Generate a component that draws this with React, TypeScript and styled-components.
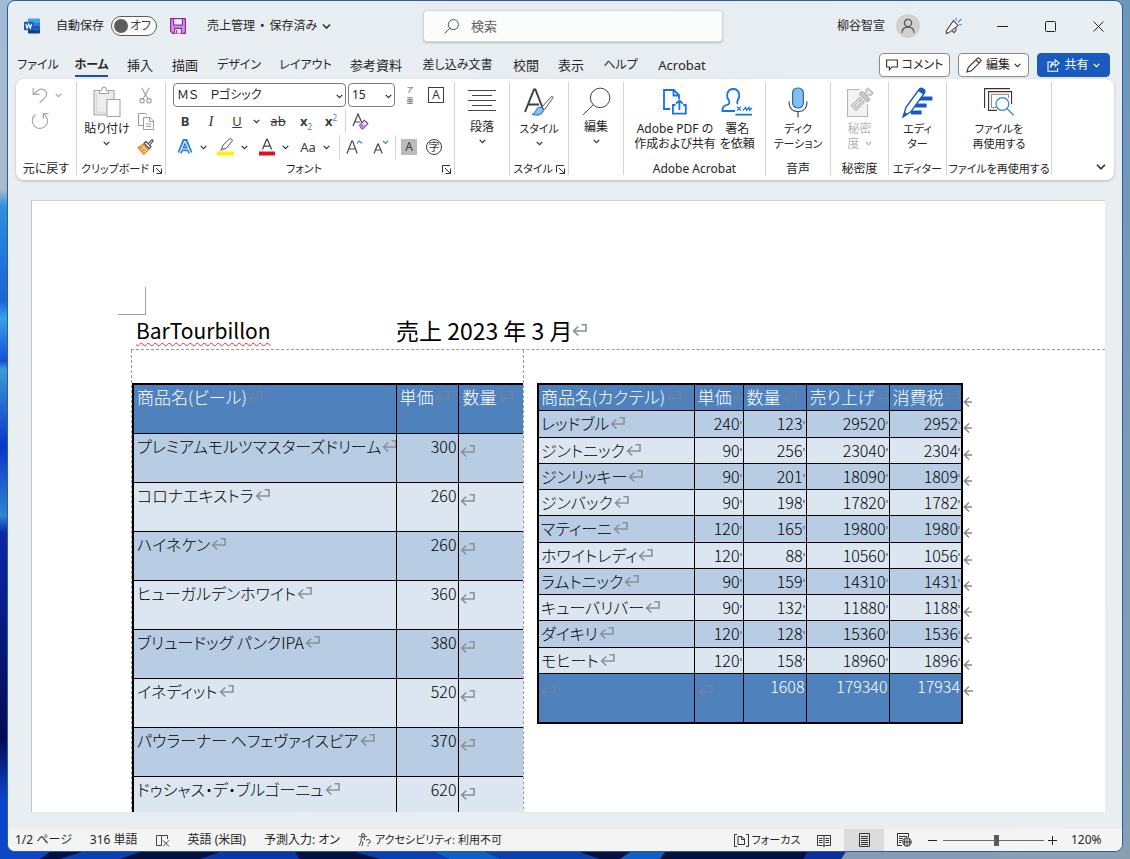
import React from "react";
import styled, { createGlobalStyle, css } from "styled-components";

const GlobalStyle = createGlobalStyle`
  *, *::before, *::after { box-sizing: border-box; }
  body {
    margin: 0;
    font-family: "Noto Sans", "Noto Sans CJK JP", sans-serif;
    font-feature-settings: "palt";
    font-size: 12px;
    line-height: 16px;
    color: #262626;
  }
  button, select, input { font: inherit; font-feature-settings: inherit; color: inherit; }
  button { background: none; border: 0; padding: 0; cursor: pointer; }
  svg { display: block; flex: none; }
`;

/* ---------- desktop and window ---------- */

const Desktop = styled.div`
  position: relative;
  height: 100vh;
  padding: 0 7px 7px 7px;
  background: #849cb4;
  overflow: hidden;
`;

const Wallpaper = styled.svg`
  position: absolute;
  inset: 0;
  width: 100%;
  height: 100%;
`;

const AppWindow = styled.div`
  position: relative;
  height: 100%;
  display: flex;
  flex-direction: column;
  border: 1px solid #2a5caa;
  border-radius: 8px;
  background: linear-gradient(100deg, #e9eef3 0%, #e8edf2 50%, #e9eef1 100%);
  overflow: hidden;
`;

const TitleBar = styled.header`
  display: grid;
  grid-template-columns: 1fr 300px 399px;
  align-items: center;
  height: 50px;
  flex: none;
`;

const TitleLeft = styled.div`
  display: flex;
  align-items: center;
  padding-left: 16px;
`;

const AutoSave = styled.label`
  display: flex;
  align-items: center;
  gap: 7px;
  margin: 0 13px 0 16px;
`;

const Toggle = styled.span`
  display: flex;
  align-items: center;
  width: 46px;
  height: 20px;
  padding: 0 5px 0 2px;
  justify-content: space-between;
  border: 1px solid #5c5c5c;
  border-radius: 10px;
  background: #fbfbfb;
  color: #444;
  input {
    appearance: none;
    margin: 0;
    width: 14px;
    height: 14px;
    border-radius: 50%;
    background: #5c5c5c;
  }
`;

const FileName = styled.button`
  display: flex;
  align-items: center;
  gap: 5px;
  margin-left: 21px;
`;

const SearchBox = styled.label`
  display: flex;
  align-items: center;
  gap: 12px;
  height: 32px;
  padding-left: 20px;
  border: 1px solid #d5d8da;
  border-radius: 4px;
  background: #fbfcfc;
  box-shadow: 0 1px 2px rgba(0, 0, 0, 0.2);
  input {
    flex: 1;
    min-width: 0;
    border: 0;
    outline: 0;
    padding: 0;
    background: none;
    font-size: 13px;
  }
  input::placeholder { color: #616161; opacity: 1; }
`;

const TitleRight = styled.div`
  display: flex;
  align-items: center;
  justify-content: flex-end;
`;

const Avatar = styled.span`
  display: grid;
  place-items: center;
  width: 24px;
  height: 24px;
  margin: 0 10px 0 11px;
  border-radius: 50%;
  background: #d1d1d1;
`;

const CaptionButton = styled.button`
  display: grid;
  place-items: center;
  width: 48px;
  height: 40px;
`;

/* ---------- tabs ---------- */

const TabRow = styled.div`
  display: flex;
  justify-content: space-between;
  align-items: center;
  height: 28px;
  flex: none;
  padding: 0 12px;
`;

const Tabs = styled.nav`
  display: flex;
  gap: 19px;
`;

const Tab = styled.button<{ $w: number; $kana?: boolean; $active?: boolean }>`
  width: ${(p) => p.$w}px;
  height: 24px;
  line-height: 24px;
  font-size: ${(p) => (p.$kana ? 12 : 13)}px;
  white-space: nowrap;
  display: flex;
  justify-content: center;
  border-bottom: 2px solid transparent;
  ${(p) =>
    p.$active &&
    css`
      font-weight: 700;
      border-color: #1a50a8;
    `}
`;

const TabActions = styled.div`
  display: flex;
  gap: 8px;
`;

const ActionButton = styled.button<{ $primary?: boolean }>`
  display: flex;
  align-items: center;
  justify-content: center;
  gap: 4px;
  width: ${(p) => (p.$primary ? 73 : 71)}px;
  height: 24px;
  border-radius: 4px;
  border: 1px solid ${(p) => (p.$primary ? "#185abd" : "#8a8a8a")};
  background: ${(p) => (p.$primary ? "#185abd" : "#fdfdfd")};
  color: ${(p) => (p.$primary ? "#fff" : "#262626")};
`;

/* ---------- ribbon ---------- */

const Ribbon = styled.section`
  display: flex;
  flex: none;
  height: 101px;
  margin: 0 8px;
  padding: 3px 0 5px;
  border-radius: 8px;
  background: #fff;
  box-shadow: 0 1px 3px rgba(0, 0, 0, 0.22);
`;

const Group = styled.div<{ $w?: number }>`
  display: flex;
  flex-direction: column;
  ${(p) =>
    p.$w
      ? css`
          flex: none;
          width: ${p.$w}px;
          border-right: 1px solid #d4d4d4;
        `
      : css`
          flex: 1;
          align-items: flex-end;
          justify-content: flex-end;
          padding: 0 8px 3px 0;
        `}
`;

const GroupBody = styled.div`
  flex: 1;
  display: flex;
  justify-content: center;
`;

const GroupFooter = styled.div<{ $small?: boolean }>`
  display: flex;
  align-items: center;
  justify-content: center;
  height: 12px;
  line-height: 12px;
  font-size: ${(p) => (p.$small ? 11 : 12)}px;
  white-space: nowrap;
  span { flex: 1; display: flex; justify-content: center; }
  svg { margin-right: 3px; }
`;

const IconStack = styled.div`
  display: flex;
  flex-direction: column;
`;

const ToolButton = styled.button<{ $w: number }>`
  display: grid;
  place-items: center;
  width: ${(p) => p.$w}px;
  height: 26px;
  flex: none;
`;

const BigButton = styled.button<{ $muted?: boolean; $kana?: boolean }>`
  display: flex;
  flex-direction: column;
  align-items: center;
  padding: 1px 2px 0;
  line-height: 15px;
  font-size: ${(p) => (p.$kana ? 11 : 12)}px;
  white-space: nowrap;
  color: ${(p) => (p.$muted ? "#b4b4b4" : "#262626")};
  > svg { margin-top: 4px; }
`;

const BigIcon = styled.span<{ $short?: boolean }>`
  display: grid;
  place-items: center;
  height: ${(p) => (p.$short ? 36 : 38)}px;
`;

const InlineLine = styled.span`
  display: flex;
  align-items: center;
  gap: 5px;
`;

const FontTools = styled.div`
  flex: 1;
  padding-left: 7px;
`;

const ToolLine = styled.div`
  display: flex;
  align-items: center;
  height: 26px;
`;

const SelectBox = styled.label<{ $w: number }>`
  position: relative;
  width: ${(p) => p.$w}px;
  margin-right: 2px;
  select {
    appearance: none;
    width: 100%;
    height: 24px;
    padding: 0 14px 0 3px;
    border: 1px solid #7c7c7c;
    border-radius: 4px;
    background: #fff;
  }
  svg {
    position: absolute;
    right: 3px;
    top: 10px;
  }
`;

const Split = styled.div`
  display: flex;
  width: 41px;
`;

const Divider = styled.span<{ $w: number }>`
  width: ${(p) => p.$w}px;
  height: 24px;
  background: linear-gradient(#d4d4d4, #d4d4d4) center / 1px 100% no-repeat;
`;

const Glyph = styled.span<{ $bold?: boolean; $italic?: boolean; $line?: string; $size?: number }>`
  font-size: ${(p) => p.$size ?? 13}px;
  line-height: 18px;
  color: #3b3b3b;
  font-weight: ${(p) => (p.$bold ? 700 : 400)};
  font-style: ${(p) => (p.$italic ? "italic" : "normal")};
  font-family: ${(p) => (p.$italic ? '"Liberation Serif", serif' : "inherit")};
  text-decoration: ${(p) => p.$line ?? "none"};
  sub, sup { color: #2b88d8; font-size: 8px; line-height: 0; font-weight: 400; }
`;

const Boxed = styled.span<{ $shape: "box" | "fill" | "circle" }>`
  display: grid;
  place-items: center;
  width: 16px;
  height: 16px;
  font-size: ${(p) => (p.$shape === "circle" ? 11 : 12)}px;
  line-height: 14px;
  color: #3b3b3b;
  border: 1px solid ${(p) => (p.$shape === "fill" ? "#bcbcbc" : "#3b3b3b")};
  border-radius: ${(p) => (p.$shape === "circle" ? 8 : 0)}px;
  background: ${(p) => (p.$shape === "fill" ? "#bcbcbc" : "transparent")};
`;

const RubyGlyph = styled.span`
  display: flex;
  flex-direction: column;
  align-items: center;
  gap: 2px;
  font-family: "Noto Sans CJK JP", sans-serif;
  font-size: 7px;
  line-height: 9px;
  color: #555;
`;

/* ---------- document ---------- */

const Workspace = styled.main`
  flex: 1;
  min-height: 0;
  display: flex;
  padding: 20px 17px 17px 23px;
`;

const Page = styled.article`
  flex: 1;
  min-width: 0;
  overflow: hidden;
  background: #fff;
  border-top: 1px solid #cdd1d5;
  border-left: 1px solid #bfc4c9;
  padding: 86px 0 0 86px;
  font-family: "Noto Sans CJK JP", sans-serif;
  color: #000;
`;

const CropMark = styled.div`
  width: 28px;
  height: 28px;
  border-right: 1px solid #a0a0a0;
  border-bottom: 1px solid #a0a0a0;
`;

const Heading = styled.h1`
  display: flex;
  align-items: center;
  height: 34px;
  margin: 0 0 0 18px;
  font-size: 23px;
  line-height: 30px;
  padding-bottom: 4px;
  font-weight: 400;
  white-space: pre;
`;

const ShopName = styled.span`
  width: 260px;
  font-size: 21px;
  u {
    text-decoration: underline wavy #e03030 1px;
    text-underline-offset: 3px;
    text-decoration-skip-ink: none;
  }
`;

const Columns = styled.div`
  display: flex;
  margin-left: 13px;
  border-top: 1px dashed #9a9a9a;
`;

const BeerColumn = styled.section`
  flex: none;
  width: 393px;
  padding-top: 33px;
  border-left: 1px dashed #9a9a9a;
  border-right: 1px dashed #9a9a9a;
  height: 640px;
`;

const CocktailColumn = styled.section`
  flex: 1;
  min-width: 0;
  padding: 33px 0 0 13px;
`;

const Sheet = styled.table<{ $tall?: boolean }>`
  border-collapse: collapse;
  table-layout: fixed;
  width: ${(p) => (p.$tall ? 391 : 437)}px;
  font-size: 16px;
  line-height: 24px;
  font-weight: 300;
  th, td {
    padding: 0 1px 0 3px;
    border: 1px solid #000;
    vertical-align: top;
    text-align: right;
    white-space: nowrap;
    overflow: hidden;
    font-weight: 300;
  }
  tr { height: ${(p) => (p.$tall ? 49 : 26)}px; }
  th { text-align: left; font-size: 17px; }
  tr > :first-child { border-left: 2px solid #000; text-align: left; padding-left: 2px; }
  thead th { border-top: 2px solid #000; }
  thead tr, tfoot tr { background: #4f81bd; color: #fff; }
  tbody tr { background: #dce6f0; }
  tbody tr:nth-child(odd) { background: #b8cce4; }
  ${(p) =>
    p.$tall
      ? css`
          tr > :first-child { padding-left: 3px; }
          tr > :last-child { border-right: 0; padding-left: 1px; text-align: left; }
          thead th:last-child { padding-left: 4px; }
        `
      : css`
          tbody tr:nth-child(4n + 1) { height: 27px; }
          tfoot tr { height: 50px; }
          tfoot td { border-bottom: 2px solid #000; }
          tr > :nth-child(5) { border-right: 2px solid #000; }
          thead tr > td:last-child, tr > td:last-child {
            border: 0;
            padding: 0;
            background: #fff;
            text-align: left;
          }
        `}
`;

const CellText = styled.span`
  display: flex;
  align-items: center;
  gap: 1px;
`;

const CellEnd = styled.i`
  display: inline-block;
  width: 2px;
  height: 3px;
  margin-bottom: 6px;
  background: #8d959e;
`;

const MarkBox = styled.span`
  display: flex;
  align-items: flex-end;
  height: 24px;
`;

/* ---------- status bar ---------- */

const StatusBar = styled.footer`
  flex: none;
  display: flex;
  align-items: center;
  justify-content: space-between;
  height: 22px;
  background: #f4f4f4;
  padding: 0 17px 0 7px;
  white-space: nowrap;
`;

const StatusSide = styled.div`
  display: flex;
  align-items: center;
  gap: 18px;
  height: 100%;
`;

const StatusButton = styled.button<{ $w?: number; $on?: boolean; $kana?: boolean }>`
  display: flex;
  align-items: center;
  justify-content: center;
  gap: 3px;
  height: 100%;
  font-size: ${(p) => (p.$kana ? 11 : 12)}px;
  width: ${(p) => (p.$w ? p.$w + "px" : "auto")};
  background: ${(p) => (p.$on ? "#dcdcdc" : "transparent")};
`;

const ZoomArea = styled.div`
  display: flex;
  align-items: center;
  height: 100%;
`;

const ZoomRange = styled.input`
  appearance: none;
  width: 101px;
  height: 12px;
  margin: 0 3px;
  background: linear-gradient(#6a6a6a, #6a6a6a) center / 100% 1px no-repeat;
  &::-webkit-slider-thumb {
    appearance: none;
    width: 5px;
    height: 11px;
    background: #5a5a5a;
  }
`;

const ZoomValue = styled.span`
  width: 34px;
  margin-left: 14px;
`;

/* ---------- icons ---------- */

const Chevron = ({ size = 7, color = "#333" }: { size?: number; color?: string }) => (
  <svg width={size} height={size} viewBox="0 0 8 8" fill="none" stroke={color} strokeWidth="1.4">
    <path d="M0.8 2.2L4 5.4L7.2 2.2" />
  </svg>
);

const Launcher = () => (
  <svg width="9" height="9" viewBox="0 0 9 9" fill="none" stroke="#333">
    <path d="M0.5 7.5V0.5H8M3 3L8 8M8.5 3.5V8.5H3.5" />
  </svg>
);

const ReturnMark = ({ color = "#8b9198" }: { color?: string }) => (
  <svg width="15" height="14" viewBox="0 0 15 14" fill="none" stroke={color} strokeWidth="1.6">
    <path d="M9.5 1.8H14V8H1.8M6.3 3.5L1.6 8L6.3 12.5" />
  </svg>
);

const RowEndMark = () => (
  <svg width="10" height="14" viewBox="0 0 10 14" fill="none" stroke="#8b8b8b" strokeWidth="1.5">
    <path d="M10 8H1.6M6 3.5L1.4 8L6 12.5" />
  </svg>
);

const WordLogo = () => (
  <svg width="16" height="16" viewBox="0 0 16 16">
    <path d="M4 1.2Q4 0.5 4.7 0.5H15.3Q16 0.5 16 1.2V4.3H4Z" fill="#41a5ee" />
    <path d="M4 4.3H16V8H4Z" fill="#2b7cd3" />
    <path d="M4 8H16V11.7H4Z" fill="#185abd" />
    <path d="M4 11.7H16V14.8Q16 15.5 15.3 15.5H4.7Q4 15.5 4 14.8Z" fill="#103f91" />
    <rect x="0" y="3.8" width="9.4" height="8.4" rx="0.8" fill="#185abd" />
    <path d="M1.8 5.8L3.1 10.2L4.7 6.2L6.3 10.2L7.6 5.8" fill="none" stroke="#fff" strokeWidth="1.2" />
  </svg>
);

const SaveIcon = () => (
  <svg width="16" height="16" viewBox="0 0 16 16" fill="none" stroke="#8a2da5" strokeWidth="1.2">
    <path d="M0.6 0.6H15.4V15.4H2.8L0.6 13.2Z" fill="#d98fe8" />
    <path d="M3.6 0.6H12.4V7.2H3.6Z" fill="#fbf2fd" />
    <path d="M4.6 15.4V10.4H11.4V15.4" fill="#fbf2fd" />
    <path d="M6.8 12V15.4" />
  </svg>
);

const SearchIcon = ({ size = 15, color = "#555", width = 1 }: { size?: number; color?: string; width?: number }) => (
  <svg width={size} height={size} viewBox="0 0 28 28" fill="none" stroke={color} strokeWidth={(width * 28) / size}>
    <circle cx="17.5" cy="10.5" r="9.4" />
    <path d="M10.8 17.2L1 27" />
  </svg>
);

const PersonIcon = () => (
  <svg width="14" height="16" viewBox="0 0 14 16" fill="none" stroke="#555" strokeWidth="1.2">
    <circle cx="7" cy="5" r="3.6" />
    <path d="M1 15C1 11 3.5 9.2 7 9.2S13 11 13 15" />
  </svg>
);

const MegaphoneIcon = () => (
  <svg width="18" height="18" viewBox="0 0 18 18" fill="none" stroke="#4a4a4a" strokeWidth="1.1">
    <path d="M8.4 3.6L13 8.4L4 15.6L1.4 16.4L1.2 14.2Z" fill="#fff" />
    <path d="M6.8 13.6L9 15.6L11 13.2V10.2" />
    <path d="M11 3.6V0.8M13 5.4L16.4 2M14 7.8H16.8" stroke="#2b88d8" />
  </svg>
);

const CommentIcon = () => (
  <svg width="12" height="12" viewBox="0 0 12 12" fill="none" stroke="#333" strokeWidth="1.1">
    <path d="M0.6 1H11.4V8H6L3.4 10.8V8H0.6Z" />
  </svg>
);

const PencilIcon = () => (
  <svg width="16" height="16" viewBox="0 0 16 16" fill="none" stroke="#333" strokeWidth="1.1">
    <path d="M1 15L2.2 10.6L11.6 1.2Q12.4 0.5 13.2 1.2L14.8 2.8Q15.5 3.6 14.8 4.4L5.4 13.8ZM10 2.9L13.1 6" />
  </svg>
);

const ShareIcon = () => (
  <svg width="13" height="13" viewBox="0 0 13 13" fill="none" stroke="#fff" strokeWidth="1.1">
    <path d="M5 3H1V12.2H10.6V9" />
    <path d="M3.6 9Q4 5 8.2 5V7.4L12.2 4L8.2 0.8V3Q3.6 3.4 3.6 9Z" />
  </svg>
);

const UndoIcon = () => (
  <svg width="16" height="17" viewBox="0 0 16 17" fill="none" stroke="#a8a8a8" strokeWidth="1.2">
    <path d="M1.2 1V7.4H7.6" />
    <path d="M1.6 7L6 3.2Q10.4 0.6 13.4 3.8Q16 7.2 13 10.6L7.6 16" />
  </svg>
);

const RedoIcon = () => (
  <svg width="18" height="18" viewBox="0 0 18 18" fill="none" stroke="#a8a8a8" strokeWidth="1.2">
    <path d="M12.4 7V1.6H17.6" />
    <path d="M4.6 2.6A7.6 7.6 0 1 0 12.6 2.2" />
  </svg>
);

const PasteIcon = () => (
  <svg width="28" height="32" viewBox="0 0 28 32" fill="none" stroke="#a6a6a6" strokeWidth="1.1">
    <path d="M14 29H1V4.5H21V14" fill="#ededed" />
    <path d="M3.5 7V26.5H13" stroke="#dcdcdc" strokeWidth="2" />
    <path d="M6.5 7.5V4.5H8.6Q8.8 1 11 1T13.4 4.5H15.5V7.5Z" fill="#fff" />
    <rect x="14" y="13.5" width="13" height="17" fill="#fff" />
  </svg>
);

const CutIcon = () => (
  <svg width="13" height="17" viewBox="0 0 13 17" fill="none" stroke="#9b9b9b" strokeWidth="1.1">
    <path d="M2.6 0.8L9 12M10.4 0.8L4 12" />
    <circle cx="3" cy="13.8" r="2.2" />
    <circle cx="10" cy="13.8" r="2.2" />
  </svg>
);

const CopyIcon = () => (
  <svg width="16" height="17" viewBox="0 0 16 17" fill="none" stroke="#9b9b9b">
    <path d="M5.5 12.5H0.5V0.5H7.5L9 2" />
    <path d="M5.5 4.5H12L15.5 8V16.5H5.5ZM11.5 4.5V8.5H15.5M8 11H13M8 13.5H13" />
  </svg>
);

const BrushIcon = () => (
  <svg width="17" height="16" viewBox="0 0 17 16" fill="none" strokeWidth="1.1">
    <path d="M6.2 5.2L11.6 10.6L6.8 15.2L1 8.6Z" fill="#f9c690" stroke="#e07b18" />
    <path d="M3 9.6L5.4 8M5.2 12.2L7.6 10" stroke="#e07b18" />
    <path d="M7 4.2L9 2.6L14 7.6L12.4 9.6Z" fill="#fff" stroke="#444" />
    <path d="M11.4 4.6L14.6 1Q16 0.4 16 2L12.8 6" fill="#fff" stroke="#444" />
  </svg>
);

const EraserIcon = () => (
  <svg width="17" height="17" viewBox="0 0 17 17" fill="none">
    <path d="M1 13L6 1L10 10M2.6 9H8" stroke="#444" strokeWidth="1.2" />
    <path d="M7.6 12.2L12.4 7.4L15.8 10.6L11 15.6H9.6Z" fill="#fff" stroke="#8b35b0" strokeWidth="1.2" />
    <path d="M7.6 12.2L9.8 10L13.2 13.2L11 15.6H9.6Z" fill="#c77be0" />
  </svg>
);

const TextEffectIcon = () => (
  <svg width="16" height="16" viewBox="0 0 16 16" fill="none">
    <path d="M2.6 14L7.4 2H8.6L13.4 14M4.6 10H11.4" stroke="#2a7fd4" strokeWidth="4.4" />
    <path d="M2.6 14L7.6 2.6H8.4L13.4 14M4.6 10H11.4" stroke="#e6f3fd" strokeWidth="1.2" />
  </svg>
);

const HighlightIcon = () => (
  <svg width="18" height="18" viewBox="0 0 18 18" fill="none">
    <rect x="0" y="13.5" width="17" height="4" fill="#fdf300" />
    <path d="M6 7.2L12.6 0.8Q14.4 0.2 15.6 2.4L9.6 10L6.4 11.2L5 9.8Z" fill="#fff" stroke="#555" />
    <path d="M5 9L7.6 11.4L4.6 12.6L2.6 12.4Z" fill="#8c8c8c" />
  </svg>
);

const FontColorIcon = () => (
  <svg width="16" height="18" viewBox="0 0 16 18" fill="none">
    <path d="M3.4 11.6L7.6 1.4H8.4L12.6 11.6M5 8.2H11" stroke="#444" strokeWidth="1.2" />
    <rect x="0" y="13.5" width="16" height="4" fill="#e0101b" />
  </svg>
);

const ResizeIcon = ({ up }: { up?: boolean }) => (
  <svg width="17" height="16" viewBox="0 0 17 16" fill="none">
    {up ? (
      <path d="M1 14.5L5.8 2H6.6L11.2 14.5M3 10H9.4" stroke="#444" strokeWidth="1.2" />
    ) : (
      <path d="M2 14.5L5.8 5H6.4L10.2 14.5M3.4 11H8.8" stroke="#444" strokeWidth="1.2" />
    )}
    <path d={up ? "M11 4.4L13.5 2L16 4.4" : "M11 2L13.5 4.4L16 2"} stroke="#2b88d8" strokeWidth="1.2" />
  </svg>
);

const ParagraphIcon = () => (
  <svg width="28" height="22" viewBox="0 0 28 22" stroke="#444" shapeRendering="crispEdges">
    <path d="M0 0.5H28M4 5.5H24M0 10.5H28M4 15.5H24M0 20.5H28" />
  </svg>
);

const StylesIcon = () => (
  <svg width="30" height="28" viewBox="0 0 30 28" fill="none">
    <path d="M1 24L10 1.5H11.4L18.6 20M4.6 16.5H15" stroke="#3d3d3d" strokeWidth="1.9" />
    <path d="M18 19L27 9Q29.6 7.6 28.6 10.4L20.6 21.6Z" fill="#fff" stroke="#555" />
    <path d="M8 26.4Q11 26 11.8 22.6Q13.4 18.4 17.4 19.4Q21 21 18.8 24.4Q15.6 28.6 8 26.4Z" fill="#83beec" stroke="#1f6fb8" />
  </svg>
);

const PdfShareIcon = () => (
  <svg width="24" height="26" viewBox="0 0 24 26" fill="none" stroke="#1473e6" strokeWidth="1.8">
    <path d="M7 20H1V1H11L16 6V10M10.5 1V6.5H16" />
    <path d="M12.5 16H9.9V24.6H22.8V16H20.2M16.4 21V12M13 14.6L16.4 11.4L19.8 14.6" />
  </svg>
);

const SignIcon = () => (
  <svg width="32" height="28" viewBox="0 0 32 28" fill="none" stroke="#1473e6" strokeWidth="1.8">
    <path d="M14 23H1.4Q1 18.6 5.4 17Q9.6 15.8 8 13Q5.6 9.6 6.2 6Q7.4 1 12.2 1T18.2 6Q18.8 9.6 16.4 13Q15.6 15 17 16" />
    <path d="M14.4 26.6H31" />
    <path d="M16 18.6L20 22.6M20 18.6L16 22.6M22 22.4L24.6 19.4L25.6 22.2L28 19.4L28.6 22.2L31 20" strokeWidth="1.3" />
  </svg>
);

const MicIcon = () => (
  <svg width="20" height="31" viewBox="0 0 20 31" fill="none">
    <rect x="4.6" y="1" width="10.8" height="20" rx="5" fill="#83beec" stroke="#1f6fb8" strokeWidth="1.2" />
    <path d="M1 14.6Q1 24.6 10 24.6T19 14.6M10 24.6V30.4" stroke="#555" strokeWidth="1.3" />
  </svg>
);

const SensitivityIcon = () => (
  <svg width="28" height="31" viewBox="0 0 28 31" fill="none" stroke="#b5b5b5" strokeWidth="1.1">
    <path d="M14 2.5H1.5V29.5H21.5V17" fill="#f3f3f3" />
    <path d="M5.4 18.6L13.6 10.4L18.4 15L10 23.4Z" fill="#e8e8e8" />
    <path d="M8.4 18.8L13.8 13.4L15.4 15L10 20.4Z" fill="#fff" />
    <path d="M13.4 7L16 4.4L24 12.4L21.4 15Z" fill="#c9c9c9" />
    <path d="M18.4 6.4L20.4 4.4L19.6 3L21.8 1L27 6L25 8.2L23.6 7.4L21.4 9.4Z" fill="#e4e4e4" />
  </svg>
);

const EditorIcon = () => (
  <svg width="31" height="31" viewBox="0 0 31 31" fill="none">
    <path d="M18 11.6H30.4M13 18.6H24.6M9 25.4H19.6" stroke="#185abd" strokeWidth="4" />
    <path d="M1 30L4 20.4L17.4 2Q19 0.4 21.4 2T22.4 6L9 24.6Z" fill="#fff" stroke="#185abd" strokeWidth="1.4" />
    <path d="M16 4L18 1.4Q21 0.4 23.2 4L21.4 7.4Z" fill="#185abd" />
    <path d="M1 30L2.6 24.8L5.6 27Z" fill="#185abd" />
  </svg>
);

const ReuseIcon = () => (
  <svg width="31" height="28" viewBox="0 0 31 28" fill="none">
    <path d="M0.6 20V0.6H26" stroke="#333" strokeWidth="1.1" />
    <path d="M13 22.4H4.6V3.6H27.6V16" stroke="#333" strokeWidth="1.1" />
    <path d="M12 19.4H7.4V6.4H24.6V10" stroke="#a8795f" />
    <circle cx="18.4" cy="16" r="6.4" fill="#fff" stroke="#2b88d8" strokeWidth="1.2" />
    <path d="M23 20.6L29.6 27.2" stroke="#2b88d8" strokeWidth="1.3" />
  </svg>
);

const ProofIcon = () => (
  <svg width="14" height="13" viewBox="0 0 14 13" fill="none" stroke="#444">
    <path d="M5.5 11.5H0.5V1.5H5.5V11.5M5.5 1.5H11.5V5M7 6.4L13 12.4M13 6.4L7 12.4" />
  </svg>
);

const AccessibilityIcon = () => (
  <svg width="14" height="14" viewBox="0 0 14 14" fill="none" stroke="#444">
    <circle cx="5" cy="2" r="1.5" />
    <path d="M0.8 3.2Q4.4 5.6 9 3.2M3.2 4.8V8L1.2 12.6M6.6 4.8L6.4 7M5 8.4L4 13M8 7.4Q10.4 5.2 12 7.4T10 10.4M10 12V13.4" />
  </svg>
);

const FocusIcon = () => (
  <svg width="15" height="13" viewBox="0 0 15 13" fill="none" stroke="#333">
    <path d="M3 0.5H0.5V12.5H3M12 0.5H14.5V12.5H12M4 2.5H8L10.5 5V10.5H4ZM7.5 2.5V5.5H10.5" />
  </svg>
);

const ReadIcon = () => (
  <svg width="14" height="13" viewBox="0 0 14 13" fill="none" stroke="#333">
    <path d="M7 1.5H0.5V11.5H5.5L7 12.5L8.5 11.5H13.5V1.5H7V12M2 4.5H5.5M2 6.5H5.5M2 8.5H5.5M8.5 4.5H12M8.5 6.5H12M8.5 8.5H12" />
  </svg>
);

const PrintLayoutIcon = () => (
  <svg width="11" height="14" viewBox="0 0 11 14" fill="none" stroke="#333">
    <path d="M0.5 0.5H10.5V13.5H0.5ZM2 3.5H9M2 5.5H9M2 7.5H9M2 9.5H9M2 11.5H9" />
  </svg>
);

const WebIcon = () => (
  <svg width="15" height="14" viewBox="0 0 15 14" fill="none" stroke="#333">
    <path d="M5 12.5H0.5V0.5H11.5V4M2 3.5H10M2 5.5H6M2 7.5H5M2 9.5H4" />
    <circle cx="10" cy="9" r="4.2" fill="#fff" />
    <path d="M5.8 9H14.2M10 5V13M8 5.4Q7 9 8 12.6M12 5.4Q13 9 12 12.6" />
  </svg>
);

const WindowIcon = ({ d }: { d: string }) => (
  <svg width="11" height="11" viewBox="0 0 11 11" fill="none" stroke="#222">
    <path d={d} />
  </svg>
);

/* ---------- data ---------- */

const tabs: { name: string; w: number; kana?: boolean; active?: boolean }[] = [
  { name: "ファイル", w: 36, kana: true },
  { name: "ホーム", w: 33, kana: true, active: true },
  { name: "挿入", w: 26 },
  { name: "描画", w: 26 },
  { name: "デザイン", w: 44, kana: true },
  { name: "レイアウト", w: 51, kana: true },
  { name: "参考資料", w: 52 },
  { name: "差し込み文書", w: 73, kana: true },
  { name: "校閲", w: 26 },
  { name: "表示", w: 26 },
  { name: "ヘルプ", w: 35, kana: true },
  { name: "Acrobat", w: 50 },
];

const beers: [string, number][] = [
  ["プレミアムモルツマスターズドリーム", 300],
  ["コロナエキストラ", 260],
  ["ハイネケン", 260],
  ["ヒューガルデンホワイト", 360],
  ["ブリュードッグ パンクIPA", 380],
  ["イネディット", 520],
  ["パウラーナー ヘフェヴァイスビア", 370],
  ["ドゥシャス・デ・ブルゴーニュ", 620],
];

const cocktails: [string, number, number, number, number][] = [
  ["レッドブル", 240, 123, 29520, 2952],
  ["ジントニック", 90, 256, 23040, 2304],
  ["ジンリッキー", 90, 201, 18090, 1809],
  ["ジンバック", 90, 198, 17820, 1782],
  ["マティーニ", 120, 165, 19800, 1980],
  ["ホワイトレディ", 120, 88, 10560, 1056],
  ["ラムトニック", 90, 159, 14310, 1431],
  ["キューバリバー", 90, 132, 11880, 1188],
  ["ダイキリ", 120, 128, 15360, 1536],
  ["モヒート", 120, 158, 18960, 1896],
];

const headMark = "#6d83a0";

const HeadCell = ({ text }: { text: string }) => (
  <th scope="col">
    <CellText>
      {text}
      <ReturnMark color={headMark} />
    </CellText>
  </th>
);

const RowEnd = () => (
  <td>
    <MarkBox>
      <RowEndMark />
    </MarkBox>
  </td>
);

/* ---------- sections ---------- */

const FontGroup = () => (
  <Group $w={289}>
    <FontTools>
      <ToolLine>
        <SelectBox $w={173}>
          <select aria-label="フォント名">
            <option>ＭＳ　Ｐゴシック</option>
          </select>
          <Chevron />
        </SelectBox>
        <SelectBox $w={47}>
          <select aria-label="フォント サイズ">
            <option>15</option>
          </select>
          <Chevron />
        </SelectBox>
        <ToolButton $w={26}>
          <RubyGlyph>
            <span>ア</span>
            <span>亜</span>
          </RubyGlyph>
        </ToolButton>
        <ToolButton $w={26}>
          <Boxed $shape="box">A</Boxed>
        </ToolButton>
      </ToolLine>
      <ToolLine>
        <ToolButton $w={24}><Glyph $bold>B</Glyph></ToolButton>
        <ToolButton $w={28}><Glyph $italic $size={15}>I</Glyph></ToolButton>
        <ToolButton $w={24}><Glyph $line="underline">U</Glyph></ToolButton>
        <ToolButton $w={14}><Chevron /></ToolButton>
        <ToolButton $w={30}><Glyph $line="line-through">ab</Glyph></ToolButton>
        <ToolButton $w={26}><Glyph $bold>x<sub>2</sub></Glyph></ToolButton>
        <ToolButton $w={24}><Glyph $bold>x<sup>2</sup></Glyph></ToolButton>
        <Divider $w={4} />
        <ToolButton $w={26}><EraserIcon /></ToolButton>
      </ToolLine>
      <ToolLine>
        <Split>
          <ToolButton $w={24}><TextEffectIcon /></ToolButton>
          <ToolButton $w={12}><Chevron /></ToolButton>
        </Split>
        <Split>
          <ToolButton $w={24}><HighlightIcon /></ToolButton>
          <ToolButton $w={12}><Chevron /></ToolButton>
        </Split>
        <Split>
          <ToolButton $w={24}><FontColorIcon /></ToolButton>
          <ToolButton $w={12}><Chevron /></ToolButton>
        </Split>
        <Split>
          <ToolButton $w={24}><Glyph>Aa</Glyph></ToolButton>
          <ToolButton $w={12}><Chevron /></ToolButton>
        </Split>
        <Divider $w={4} />
        <ToolButton $w={26}><ResizeIcon up /></ToolButton>
        <ToolButton $w={26}><ResizeIcon /></ToolButton>
        <Divider $w={4} />
        <ToolButton $w={24}><Boxed $shape="fill">A</Boxed></ToolButton>
        <ToolButton $w={26}><Boxed $shape="circle">字</Boxed></ToolButton>
      </ToolLine>
    </FontTools>
    <GroupFooter $small><span>フォント</span><Launcher /></GroupFooter>
  </Group>
);

const RibbonPanel = () => (
  <Ribbon>
    <Group $w={61}>
      <GroupBody>
        <IconStack>
          <ToolButton $w={24}><UndoIcon /></ToolButton>
          <ToolButton $w={24}><RedoIcon /></ToolButton>
        </IconStack>
        <ToolButton $w={12}><Chevron color="#a8a8a8" /></ToolButton>
      </GroupBody>
      <GroupFooter>元に戻す</GroupFooter>
    </Group>
    <Group $w={89}>
      <GroupBody>
        <BigButton>
          <BigIcon><PasteIcon /></BigIcon>
          貼り付け
          <Chevron />
        </BigButton>
        <IconStack>
          <ToolButton $w={28}><CutIcon /></ToolButton>
          <ToolButton $w={28}><CopyIcon /></ToolButton>
          <ToolButton $w={28}><BrushIcon /></ToolButton>
        </IconStack>
      </GroupBody>
      <GroupFooter $small><span>クリップボード</span><Launcher /></GroupFooter>
    </Group>
    <FontGroup />
    <Group $w={55}>
      <GroupBody>
        <BigButton>
          <BigIcon $short><ParagraphIcon /></BigIcon>
          段落
          <Chevron />
        </BigButton>
      </GroupBody>
    </Group>
    <Group $w={59}>
      <GroupBody>
        <BigButton $kana>
          <BigIcon><StylesIcon /></BigIcon>
          スタイル
          <Chevron />
        </BigButton>
      </GroupBody>
      <GroupFooter $small><span>スタイル</span><Launcher /></GroupFooter>
    </Group>
    <Group $w={55}>
      <GroupBody>
        <BigButton>
          <BigIcon $short><SearchIcon size={29} color="#444" width={1} /></BigIcon>
          編集
          <Chevron />
        </BigButton>
      </GroupBody>
    </Group>
    <Group $w={142}>
      <GroupBody>
        <BigButton>
          <BigIcon><PdfShareIcon /></BigIcon>
          <span>Adobe PDF の</span>
          <span>作成および共有</span>
        </BigButton>
        <BigButton>
          <BigIcon><SignIcon /></BigIcon>
          <span>署名</span>
          <span>を依頼</span>
        </BigButton>
      </GroupBody>
      <GroupFooter>Adobe Acrobat</GroupFooter>
    </Group>
    <Group $w={65}>
      <GroupBody>
        <BigButton $kana>
          <BigIcon><MicIcon /></BigIcon>
          <span>ディク</span>
          <span>テーション</span>
        </BigButton>
      </GroupBody>
      <GroupFooter>音声</GroupFooter>
    </Group>
    <Group $w={58}>
      <GroupBody>
        <BigButton $muted disabled>
          <BigIcon><SensitivityIcon /></BigIcon>
          <span>秘密</span>
          <InlineLine>度<Chevron color="#b4b4b4" /></InlineLine>
        </BigButton>
      </GroupBody>
      <GroupFooter>秘密度</GroupFooter>
    </Group>
    <Group $w={58}>
      <GroupBody>
        <BigButton $kana>
          <BigIcon><EditorIcon /></BigIcon>
          <span>エディ</span>
          <span>ター</span>
        </BigButton>
      </GroupBody>
      <GroupFooter $small>エディター</GroupFooter>
    </Group>
    <Group $w={105}>
      <GroupBody>
        <BigButton $kana>
          <BigIcon><ReuseIcon /></BigIcon>
          <span>ファイルを</span>
          <span>再使用する</span>
        </BigButton>
      </GroupBody>
      <GroupFooter $small>ファイルを再使用する</GroupFooter>
    </Group>
    <Group>
      <button aria-label="リボンを折りたたむ"><Chevron size={10} /></button>
    </Group>
  </Ribbon>
);

const BeerTable = () => (
  <Sheet $tall>
    <colgroup>
      <col style={{ width: 263 }} />
      <col style={{ width: 62 }} />
      <col />
    </colgroup>
    <thead>
      <tr>
        <HeadCell text="商品名(ビール)" />
        <HeadCell text="単価" />
        <HeadCell text="数量" />
      </tr>
    </thead>
    <tbody>
      {beers.map(([name, price]) => (
        <tr key={name}>
          <td><CellText>{name}<ReturnMark /></CellText></td>
          <td>{price}</td>
          <td><MarkBox><ReturnMark /></MarkBox></td>
        </tr>
      ))}
    </tbody>
  </Sheet>
);

const CocktailTable = () => (
  <Sheet>
    <colgroup>
      <col style={{ width: 156 }} />
      <col style={{ width: 49 }} />
      <col style={{ width: 63 }} />
      <col style={{ width: 83 }} />
      <col style={{ width: 73 }} />
      <col />
    </colgroup>
    <thead>
      <tr>
        {["商品名(カクテル)", "単価", "数量", "売り上げ", "消費税"].map((h) => (
          <HeadCell key={h} text={h} />
        ))}
        <RowEnd />
      </tr>
    </thead>
    <tbody>
      {cocktails.map(([name, ...values]) => (
        <tr key={name}>
          <td><CellText>{name}<ReturnMark /></CellText></td>
          {values.map((v, i) => (
            <td key={i}>{v}<CellEnd /></td>
          ))}
          <RowEnd />
        </tr>
      ))}
    </tbody>
    <tfoot>
      <tr>
        <td><MarkBox><ReturnMark color={headMark} /></MarkBox></td>
        <td><MarkBox><ReturnMark color={headMark} /></MarkBox></td>
        <td>1608</td>
        <td>179340</td>
        <td>17934</td>
        <RowEnd />
      </tr>
    </tfoot>
  </Sheet>
);

export default function App() {
  return (
    <Desktop>
      <GlobalStyle />
      <Wallpaper viewBox="0 0 1130 859" preserveAspectRatio="none" aria-hidden="true">
        <defs>
          <linearGradient id="sideLeft" x1="0" y1="0" x2="0" y2="1">
            <stop offset="0" stopColor="#9fbcd4" />
            <stop offset="0.22" stopColor="#a9bccb" />
            <stop offset="0.24" stopColor="#2f8fdc" />
            <stop offset="0.35" stopColor="#1a63d8" />
            <stop offset="0.37" stopColor="#3aa0e8" />
            <stop offset="0.42" stopColor="#1450d4" />
            <stop offset="0.43" stopColor="#3d9ad6" />
            <stop offset="0.52" stopColor="#0a35c8" />
            <stop offset="0.6" stopColor="#2d86cf" />
            <stop offset="0.62" stopColor="#0a27a8" />
            <stop offset="0.86" stopColor="#040c50" />
            <stop offset="0.93" stopColor="#0b46c8" />
          </linearGradient>
          <linearGradient id="sideRight" x1="0" y1="0" x2="0" y2="1">
            <stop offset="0" stopColor="#6b97b8" />
            <stop offset="0.5" stopColor="#7c9ab4" />
            <stop offset="1" stopColor="#8a9fb1" />
          </linearGradient>
        </defs>
        <rect x="1000" width="130" height="859" fill="url(#sideRight)" />
        <rect width="20" height="859" fill="url(#sideLeft)" />
        <path d="M0 845H850L841 859H0Z" fill="#05103c" />
        <path d="M10 845H60L40 859H0V845Z" fill="#0d47c4" />
        <path d="M60 859Q85 850 110 845H160L120 859Z" fill="#0c3fb4" />
        <path d="M200 859L240 845H290L300 859Z" fill="#0a37a6" />
        <path d="M330 845H560L600 859H380Z" fill="#0b3fae" />
        <path d="M420 845H470L500 859H450ZM640 845H670L660 859H620Z" fill="#0c60c8" />
        <path d="M812 845H850L841 859H803Z" fill="#0c2f9c" />
      </Wallpaper>
      <AppWindow>
        <TitleBar>
          <TitleLeft>
            <WordLogo />
            <AutoSave>
              自動保存
              <Toggle>
                <input type="checkbox" role="switch" />
                オフ
              </Toggle>
            </AutoSave>
            <button aria-label="上書き保存"><SaveIcon /></button>
            <FileName>
              <span>売上管理</span>
              <span>•</span>
              <span>保存済み</span>
              <Chevron size={9} />
            </FileName>
          </TitleLeft>
          <SearchBox>
            <SearchIcon />
            <input type="text" placeholder="検索" aria-label="検索" />
          </SearchBox>
          <TitleRight>
            柳谷智宣
            <Avatar><PersonIcon /></Avatar>
            <CaptionButton aria-label="新機能"><MegaphoneIcon /></CaptionButton>
            <CaptionButton aria-label="最小化"><WindowIcon d="M0 5.5H11" /></CaptionButton>
            <CaptionButton aria-label="最大化"><WindowIcon d="M1.5 0.5H9.5Q10.5 0.5 10.5 1.5V9.5Q10.5 10.5 9.5 10.5H1.5Q0.5 10.5 0.5 9.5V1.5Q0.5 0.5 1.5 0.5Z" /></CaptionButton>
            <CaptionButton aria-label="閉じる"><WindowIcon d="M0.5 0.5L10.5 10.5M10.5 0.5L0.5 10.5" /></CaptionButton>
          </TitleRight>
        </TitleBar>
        <TabRow>
          <Tabs>
            {tabs.map((t) => (
              <Tab key={t.name} $w={t.w} $kana={t.kana} $active={t.active}>
                {t.name}
              </Tab>
            ))}
          </Tabs>
          <TabActions>
            <ActionButton><CommentIcon />コメント</ActionButton>
            <ActionButton><PencilIcon />編集<Chevron /></ActionButton>
            <ActionButton $primary><ShareIcon />共有<Chevron color="#fff" /></ActionButton>
          </TabActions>
        </TabRow>
        <RibbonPanel />
        <Workspace>
          <Page>
            <CropMark />
            <Heading>
              <ShopName><u>BarTourbillon</u></ShopName>
              売上 2023 年 3 月
              <ReturnMark />
            </Heading>
            <Columns>
              <BeerColumn><BeerTable /></BeerColumn>
              <CocktailColumn><CocktailTable /></CocktailColumn>
            </Columns>
          </Page>
        </Workspace>
        <StatusBar>
          <StatusSide>
            <StatusButton>1/2 ページ</StatusButton>
            <StatusButton>316 単語</StatusButton>
            <StatusButton aria-label="文章校正"><ProofIcon /></StatusButton>
            <StatusButton>英語 (米国)</StatusButton>
            <StatusButton>予測入力: オン</StatusButton>
            <StatusButton $kana><AccessibilityIcon />アクセシビリティ: 利用不可</StatusButton>
          </StatusSide>
          <ZoomArea>
            <StatusButton $w={74} $kana><FocusIcon />フォーカス</StatusButton>
            <StatusButton $w={40} aria-label="閲覧モード"><ReadIcon /></StatusButton>
            <StatusButton $w={40} $on aria-label="印刷レイアウト"><PrintLayoutIcon /></StatusButton>
            <StatusButton $w={40} aria-label="Web レイアウト"><WebIcon /></StatusButton>
            <StatusButton $w={16} aria-label="縮小"><WindowIcon d="M1 5.5H10" /></StatusButton>
            <ZoomRange type="range" min={0} max={100} defaultValue={53} aria-label="ズーム" />
            <StatusButton $w={10} aria-label="拡大"><WindowIcon d="M1 5.5H10M5.5 1V10" /></StatusButton>
            <ZoomValue>120%</ZoomValue>
          </ZoomArea>
        </StatusBar>
      </AppWindow>
    </Desktop>
  );
}
